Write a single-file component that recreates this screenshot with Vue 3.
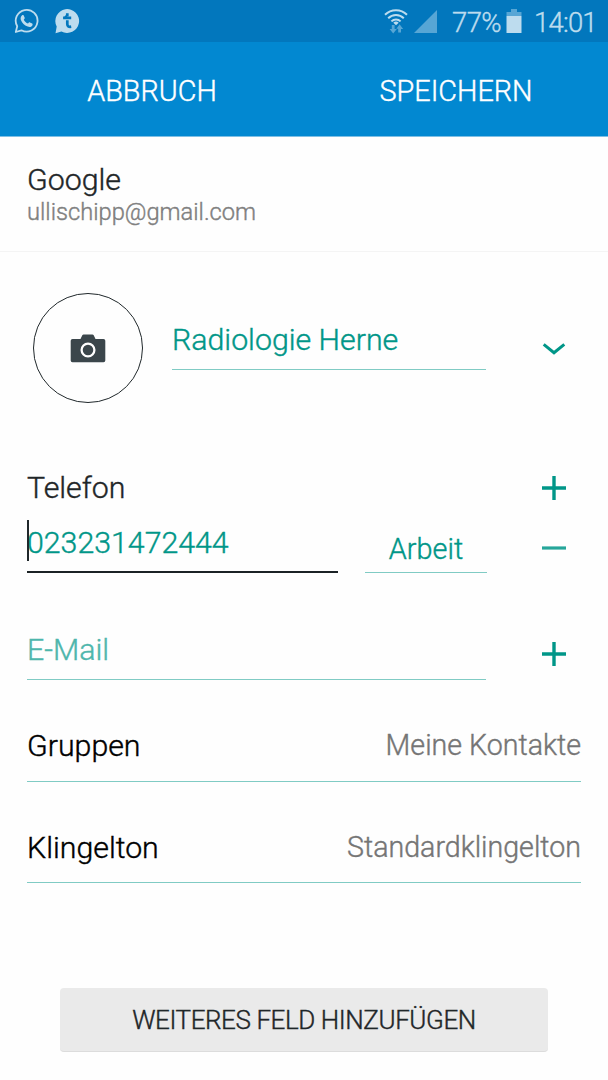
<template>
  <div class="screen">
    <div class="status">
      <div class="status-left">
        <svg class="whatsapp" width="26" height="26" viewBox="0 0 26 26">
          <path d="M1.8 24 L3.2 18.2 A10.9 10.9 0 1 1 7.4 22.3 Z" fill="none" stroke="#bddcee" stroke-width="1.8" stroke-linejoin="round" />
          <path d="M7.9 7.4 c.6-.5 1.5-.6 1.8.1 l1 2.3 c.2.6-.1 1-.9 1.9 c.9 1.9 2.3 3.1 4.2 3.9 c.9-1.1 1.2-1.5 1.9-1.2 l2.3 1.1 c.7.4.4 1.6 0 2.2 c-1 1.4-2.8 1.6-4.5.9 c-3.5-1.3-5.5-3.6-6.7-6.3 c-.7-1.7-.4-3.8.9-4.9z" fill="#bddcee" />
        </svg>
        <svg class="bubble" width="26" height="26" viewBox="0 0 26 26">
          <path d="M.5 25.2 L1.7 18.6 A11.9 11.9 0 1 1 6.4 23.4 Z" fill="#bddcee" />
          <path d="M8.1 9.9 H16.2 M12.3 5.2 V8.2 M12.3 12.2 V16 Q12.3 19.3 16.2 18.7" fill="none" stroke="#0277bd" stroke-width="2.7" />
          <path d="M8.1 10.2 L12.2 5.4 V10.2Z" fill="#0277bd" />
        </svg>
      </div>
      <div class="status-right">
        <svg class="wifi" width="24" height="26" viewBox="0 0 24 26">
          <g fill="none" stroke="#bddcee" stroke-width="2">
            <path d="M1 6.8 A15.6 15.6 0 0 1 23 6.8" />
            <path d="M4.2 10.2 A11 11 0 0 1 19.8 10.2" />
            <path d="M7.4 13.4 A6.5 6.5 0 0 1 16.6 13.4" />
          </g>
          <path d="M9.3 14.7 Q12 12.4 14.7 14.7 L12 17.3Z" fill="#bddcee" />
          <path d="M7.8 17 h2.8 v4 h2.2 L9.2 25.4 L5.6 21 h2.2z M14.2 24.6 h2.8 v-3.6 h2.2 L15.6 16.2 L12.4 20.8 h1.8z" fill="#57a6d5" />
        </svg>
        <svg class="signal" width="23" height="23" viewBox="0 0 23 23">
          <path d="M23 0 V23 H0Z" fill="#57a6d5" />
        </svg>
        <span class="percent">77%</span>
        <svg class="battery" width="16" height="24" viewBox="0 0 16 24">
          <path d="M5 0 H11 V3 H15.5 V7 H.5 V3 H5Z" fill="#57a6d5" />
          <path d="M.5 7 H15.5 V24 H.5Z" fill="#bddcee" />
        </svg>
        <span class="clock">14:01</span>
      </div>
    </div>

    <div class="actions">
      <div class="action"><span class="cancel">ABBRUCH</span></div>
      <div class="action"><span class="save">SPEICHERN</span></div>
    </div>

    <div class="account">
      <div class="provider"><span>Google</span></div>
      <div class="address"><span>{{ account }}</span></div>
    </div>

    <div class="form">
      <div class="name-row">
        <div class="photo">
          <svg width="36" height="29" viewBox="0 0 36 29">
            <path d="M2.5 5 H10.5 L12.3 1.3 Q12.7 .5 13.6 .5 H22.4 Q23.3 .5 23.7 1.3 L25.5 5 H33.5 Q35.3 5 35.3 6.8 V26.5 Q35.3 28.3 33.5 28.3 H2.5 Q.7 28.3 .7 26.5 V6.8 Q.7 5 2.5 5Z" fill="#3b464b" />
            <circle cx="18" cy="16" r="6.4" fill="none" stroke="#fff" stroke-width="2.3" />
          </svg>
        </div>
        <div class="field name"><span>{{ name }}</span></div>
        <div class="icon">
          <svg width="24" height="14" viewBox="0 0 24 14">
            <path d="M1.7 2.3 L12 10.7 L22.3 2.3" fill="none" stroke="#009688" stroke-width="3" />
          </svg>
        </div>
      </div>

      <div class="heading-row">
        <div class="heading"><span>Telefon</span></div>
        <div class="icon">
          <svg width="24" height="24" viewBox="0 0 24 24">
            <path d="M0 12 H24 M12 0 V24" stroke="#009688" stroke-width="3.4" />
          </svg>
        </div>
      </div>

      <div class="phone-row">
        <div class="field number"><i class="caret"></i><span>{{ phone }}</span></div>
        <div class="field type"><span>Arbeit</span></div>
        <div class="icon">
          <svg width="24" height="4" viewBox="0 0 24 4">
            <path d="M0 2 H24" stroke="#26a69a" stroke-width="3.2" />
          </svg>
        </div>
      </div>

      <div class="mail-row">
        <div class="field mail"><span>E-Mail</span></div>
        <div class="icon">
          <svg width="24" height="24" viewBox="0 0 24 24">
            <path d="M0 12 H24 M12 0 V24" stroke="#009688" stroke-width="3.4" />
          </svg>
        </div>
      </div>

      <div v-for="item in options" :key="item.label" class="option" :class="item.id">
        <span class="label">{{ item.label }}</span>
        <span class="value">{{ item.value }}</span>
      </div>
    </div>

    <button class="more"><span>WEITERES FELD HINZUFÜGEN</span></button>
  </div>
</template>

<script setup>
import { ref } from 'vue'

const account = ref('ullischipp@gmail.com')
const name = ref('Radiologie Herne')
const phone = ref('023231472444')

const options = [
  { id: 'groups', label: 'Gruppen', value: 'Meine Kontakte' },
  { id: 'ringtone', label: 'Klingelton', value: 'Standardklingelton' }
]
</script>

<style>
body {
  margin: 0;
  background: #fefefe;
}
</style>

<style scoped>
.screen {
  width: 608px;
  height: 1080px;
  overflow: hidden;
  box-sizing: border-box;
  background: #fefefe;
  font-family: Roboto, sans-serif;
  font-size: 30.3px;
  font-weight: 300;
  -webkit-text-stroke: 0.4px currentColor;
  color: #1f2628;
  white-space: nowrap;
}

svg {
  display: block;
  flex: none;
}

.status {
  height: 42px;
  display: flex;
  justify-content: space-between;
  background: #0277bd;
  color: #bddcee;
}

.status-left,
.status-right {
  display: flex;
  align-items: flex-start;
}

.status-left {
  padding: 8px 0 0 14px;
  gap: 15px;
}

.status-right {
  font-size: 27.5px;
  line-height: 45px;
}

.wifi {
  margin-top: 8px;
}

.signal {
  margin: 10px 0 0 6px;
}

.percent {
  width: 48px;
  margin-left: 15px;
  letter-spacing: -0.6px;
}

.battery {
  margin: 9px 0 0 6px;
}

.clock {
  width: 64px;
  margin: 0 10px 0 12px;
  letter-spacing: -0.8px;
}

.actions {
  height: 94px;
  display: flex;
  background: #0288d1;
  border-bottom: 1px solid #7fbfe4;
  color: #fff;
  font-size: 28.8px;
  line-height: 98px;
}

.action {
  flex: 1;
  text-align: center;
}

.account {
  height: 115px;
  padding: 25px 27px 0;
  box-sizing: border-box;
  border-bottom: 1px solid #f4f4f4;
}

.provider {
  line-height: 36px;
}

.address {
  font-size: 23.7px;
  line-height: 28px;
  color: #808080;
}

.form {
  padding: 0 27px;
}

.field {
  box-sizing: border-box;
  border-bottom: 1px solid #80cbc4;
  color: #009688;
}

.icon {
  width: 54px;
  margin-left: auto;
  display: flex;
  justify-content: center;
  align-items: center;
}

.name-row {
  display: flex;
  margin-top: 41px;
  height: 111px;
}

.photo {
  width: 110px;
  height: 110px;
  margin-left: 6px;
  box-sizing: border-box;
  border: 1.3px solid #20282b;
  border-radius: 50%;
  display: flex;
  justify-content: center;
  align-items: center;
}

.name {
  width: 314px;
  height: 77px;
  margin-left: 29px;
  padding-top: 24px;
  line-height: 46px;
}

.heading-row {
  display: flex;
  height: 54px;
  margin-top: 57px;
}

.heading {
  line-height: 54px;
}

.phone-row {
  display: flex;
  height: 58px;
}

.number {
  position: relative;
  width: 311px;
  border-bottom: 2px solid #1b2225;
  line-height: 56px;
}

.caret {
  position: absolute;
  left: 0;
  top: 5px;
  width: 2px;
  height: 41px;
  background: #20282b;
}

.type {
  width: 122px;
  margin-left: 27px;
  text-align: center;
  font-size: 28.8px;
  line-height: 68px;
}

.phone-row .icon {
  height: 65px;
}

.mail-row {
  display: flex;
  height: 107px;
}

.mail {
  width: 459px;
  color: #4db6ac;
  line-height: 153px;
}

.mail-row .icon {
  height: 162px;
}

.option {
  display: flex;
  justify-content: space-between;
  height: 102px;
  box-sizing: border-box;
  border-bottom: 1px solid #80cbc4;
  line-height: 131px;
}

.option.ringtone {
  height: 101px;
}

.label {
  color: #000;
}

.value {
  font-size: 28.6px;
  color: #757575;
}

.more {
  display: block;
  width: 488px;
  height: 64px;
  margin: 105px 0 0 60px;
  padding: 0;
  border: 0;
  border-bottom: 1px solid #dcdcdc;
  border-radius: 4px;
  background: #eaeaea;
  font-family: inherit;
  font-size: 26px;
  font-weight: inherit;
  letter-spacing: -0.42px;
  line-height: 65px;
  color: #1f2628;
}
</style>
